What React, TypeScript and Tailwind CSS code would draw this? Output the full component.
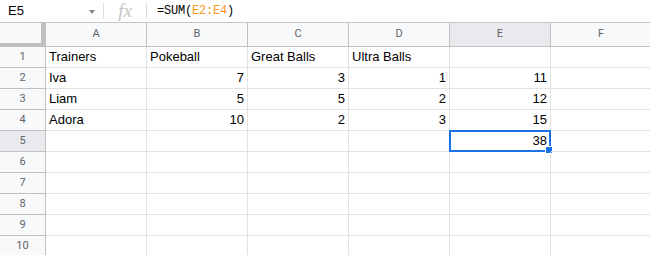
import React from 'react';

const cols = ['A', 'B', 'C', 'D', 'E', 'F'];

// cell values per row, numbers are right-aligned like Sheets does
const data: (string | number | null)[][] = [
  ['Trainers', 'Pokeball', 'Great Balls', 'Ultra Balls', null, null],
  ['Iva', 7, 3, 1, 11, null],
  ['Liam', 5, 5, 2, 12, null],
  ['Adora', 10, 2, 3, 15, null],
  [null, null, null, null, 38, null],
  [null, null, null, null, null, null],
  [null, null, null, null, null, null],
  [null, null, null, null, null, null],
  [null, null, null, null, null, null],
  [null, null, null, null, null, null],
];

const App: React.FC = () => {
  return (
    <div className="w-[650px] h-[255px] overflow-hidden bg-white font-['Liberation_Sans',Arial,sans-serif] text-black">
      {/* formula bar */}
      <div className="flex items-center h-[23px] border-b border-[#c7c7c7]">
        <div className="w-[103px] flex items-center pl-[8px] pr-[8px] text-[13px]">
          <span className="flex-1">E5</span>
          <span className="w-0 h-0 border-l-[3.5px] border-r-[3.5px] border-t-[4px] border-l-transparent border-r-transparent border-t-[#80868b] mt-[1px]" />
        </div>
        <div className="w-px h-[16px] bg-[#dadce0]" />
        <div className="w-[42px] flex justify-center text-[#c4c4c4] italic text-[19px] leading-none font-['Liberation_Serif',serif] -mt-[2px]">
          fx
        </div>
        <div className="w-px h-[16px] bg-[#dadce0]" />
        <div className="pl-[10px] font-['Liberation_Mono',monospace] text-[12px] text-black tracking-[-0.2px]">
          =SUM(<span className="text-[#f7981d]">E2:E4</span>)
        </div>
      </div>

      {/* column headers */}
      <div className="flex h-[24px] bg-[#f8f9fa] border-b border-[#c0c0c0]">
        <div className="w-[46px] shrink-0 border-r-[5px] border-b-[4px] border-[#c0c0c0] h-[24px]" />
        {cols.map((c) => (
          <div
            key={c}
            className={`w-[101px] shrink-0 flex items-center justify-center border-r border-[#c0c0c0] text-[11px] text-[#5f6368] font-['Roboto',sans-serif] ${
              c === 'E' ? 'bg-[#e8eaed]' : ''
            }`}
          >
            {c}
          </div>
        ))}
      </div>

      {/* rows */}
      {data.map((row, r) => (
        <div key={r} className="flex h-[21px]">
          <div
            className={`w-[46px] shrink-0 flex items-center justify-center border-r border-b border-[#c0c0c0] text-[11px] text-[#5f6368] font-['Roboto',sans-serif] ${
              r === 4 ? 'bg-[#e8eaed]' : 'bg-[#f8f9fa]'
            }`}
          >
            {r + 1}
          </div>
          {row.map((v, c) => {
            const selected = r === 4 && c === 4;
            return (
              <div
                key={c}
                className={`relative w-[101px] shrink-0 flex items-center border-r border-b border-[#e2e2e3] text-[13px] px-[3px] ${
                  typeof v === 'number' ? 'justify-end' : 'justify-start'
                }`}
              >
                {selected && (
                  <>
                    <div className="absolute -left-px -top-px w-[102px] h-[22px] border-2 border-[#1a73e8]" />
                    <div className="absolute -right-[3px] -bottom-[3px] w-[6px] h-[6px] bg-[#1a73e8] border border-white box-content" />
                  </>
                )}
                <span className="relative">{v}</span>
              </div>
            );
          })}
        </div>
      ))}
    </div>
  );
};

export default App;
